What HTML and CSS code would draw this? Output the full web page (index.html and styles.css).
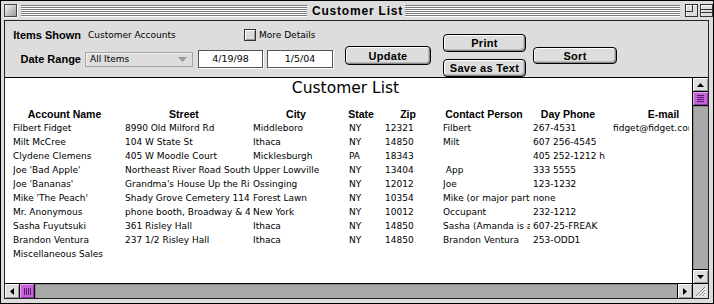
FILE: index.html
```html
<!DOCTYPE html>
<html lang="en">
<head>
    <meta charset="UTF-8">
    <meta name="viewport" content="width=device-width, initial-scale=1.0">
    <title>Customer List</title>
    <link rel="stylesheet" href="styles.css">
</head>
<body>
<div class="window">
    <div class="titlebar">
        <span class="closebox"></span>
        <span class="stripes left"></span>
        <span class="title">Customer List</span>
        <span class="stripes right"></span>
        <span class="zoombox"><i></i></span>
        <span class="collapsebox"><i></i></span>
    </div>
    <div class="frame">
        <div class="panel">
            <div class="controls">
                <div class="filters">
                    <div class="line">
                        <span class="label">Items Shown</span>
                        <span class="value">Customer Accounts</span>
                        <span class="checkbox"></span>
                        <span class="cblabel">More Details</span>
                    </div>
                    <div class="line line2">
                        <span class="label">Date Range</span>
                        <div class="popup">
                            <span>All Items</span>
                            <svg width="9" height="5" viewBox="0 0 9 5"><polygon points="0,0 9,0 4.5,5" fill="#999"/></svg>
                        </div>
                        <div class="field">4/19/98</div>
                        <div class="field second">1/5/04</div>
                    </div>
                </div>
                <button class="btn update">Update</button>
                <div class="btncol">
                    <button class="btn print">Print</button>
                    <button class="btn save">Save as Text</button>
                </div>
                <button class="btn sort">Sort</button>
            </div>

            <div class="listarea">
                <div class="list">
                    <div class="heading">Customer List</div>
                    <div class="headrow">
                        <div class="hcell w1">Account Name</div>
                        <div class="hcell w2">Street</div>
                        <div class="hcell w3">City</div>
                        <div class="hcell w4">State</div>
                        <div class="hcell w5">Zip</div>
                        <div class="hcell w6">Contact Person</div>
                        <div class="hcell w7">Day Phone</div>
                        <div class="hcell w8">E-mail</div>
                    </div>
                    <div id="records"></div>
                </div>
                <div class="vscroll">
                    <div class="arrowbox up">
                        <svg width="7" height="4" viewBox="0 0 7 4"><polygon points="0,4 7,4 3.5,0" fill="#000"/></svg>
                    </div>
                    <div class="vthumb"><i></i><i></i><i></i><i></i></div>
                    <div class="track"></div>
                    <div class="arrowbox down">
                        <svg width="7" height="4" viewBox="0 0 7 4"><polygon points="0,0 7,0 3.5,4" fill="#000"/></svg>
                    </div>
                </div>
            </div>

            <div class="hscroll">
                <div class="arrowbox left">
                    <svg width="4" height="7" viewBox="0 0 4 7"><polygon points="4,0 4,7 0,3.5" fill="#000"/></svg>
                </div>
                <div class="hthumb"><i></i><i></i><i></i><i></i></div>
                <div class="track"></div>
                <div class="arrowbox right">
                    <svg width="4" height="7" viewBox="0 0 4 7"><polygon points="0,0 0,7 4,3.5" fill="#000"/></svg>
                </div>
                <div class="growbox">
                    <svg width="15" height="14" viewBox="0 0 15 14">
                        <line x1="3" y1="12" x2="12" y2="3" stroke="#888"/>
                        <line x1="4" y1="13" x2="13" y2="4" stroke="#fff"/>
                        <line x1="6" y1="12" x2="12" y2="6" stroke="#888"/>
                        <line x1="7" y1="13" x2="13" y2="7" stroke="#fff"/>
                        <line x1="9" y1="12" x2="12" y2="9" stroke="#888"/>
                        <line x1="10" y1="13" x2="13" y2="10" stroke="#fff"/>
                    </svg>
                </div>
            </div>
        </div>
    </div>
</div>

<script>
    let customers = [
        ["Filbert Fidget", "8990 Old Milford Rd", "Middleboro", "NY", "12321", "Filbert", "267-4531", "fidget@fidget.com"],
        ["Milt McCree", "104 W State St", "Ithaca", "NY", "14850", "Milt", "607 256-4545", ""],
        ["Clydene Clemens", "405 W Moodle Court", "Micklesburgh", "PA", "18343", "", "405 252-1212 h", ""],
        ["Joe 'Bad Apple'", "Northeast River Road South", "Upper Lowville", "NY", "13404", " App", "333 5555", ""],
        ["Joe 'Bananas'", "Grandma's House Up the River", "Ossinging", "NY", "12012", "Joe", "123-1232", ""],
        ["Mike 'The Peach'", "Shady Grove Cemetery 114", "Forest Lawn", "NY", "10354", "Mike (or major parts)", "none", ""],
        ["Mr. Anonymous", "phone booth, Broadway & 4th", "New York", "NY", "10012", "Occupant", "232-1212", ""],
        ["Sasha Fuyutsuki", "361 Risley Hall", "Ithaca", "NY", "14850", "Sasha (Amanda is also ok)", "607-25-FREAK", ""],
        ["Brandon Ventura", "237 1/2 Risley Hall", "Ithaca", "NY", "14850", "Brandon Ventura", "253-ODD1", ""],
        ["Miscellaneous Sales", "", "", "", "", "", "", ""]
    ];

    // build the record rows
    let records = document.getElementById("records");
    customers.forEach((c) => {
        let html = '<div class="rec">';
        c.forEach((v) => {
            html += `<div class="cell">${v}</div>`;
        });
        html += '</div>';
        records.innerHTML += html;
    });
</script>
</body>
</html>
```

FILE: styles.css
```css
body{
    margin: 0;
    background-color: #ddd;
}
.window{
    width: 714px;
    height: 304px;
    box-sizing: border-box;
    border: 1px solid #000;
    background-color: #dddddd;
    display: flex;
    flex-direction: column;
    font-family: "DejaVu Sans", sans-serif;
    font-size: 9px;
    color: #000;
}

/* title bar */
.titlebar{
    height: 19px;
    display: flex;
    align-items: center;
}
.closebox{
    margin-left: 3px;
    width: 11px;
    height: 11px;
    border: 1px solid #444;
    background: linear-gradient(135deg, #f4f4f4, #9a9a9a);
    box-shadow: 1px 1px 0 #fff;
}
.stripes{
    height: 12px;
    background: repeating-linear-gradient(#7a7a7a 0 1px, #fff 1px 2px);
}
.stripes.left{
    margin-left: 4px;
    width: 286px;
}
.stripes.right{
    flex: 1;
    margin-left: 2px;
}
.title{
    margin-left: 5px;
    font-family: "Liberation Sans", sans-serif;
    font-weight: bold;
    font-size: 12px;
    letter-spacing: 0.8px;
}
.zoombox, .collapsebox{
    width: 11px;
    height: 11px;
    border: 1px solid #333;
    background: #ddd;
    box-shadow: inset 1px 1px #fff;
}
.zoombox{
    margin-left: 5px;
}
.zoombox i{
    display: block;
    width: 6px;
    height: 6px;
    border-right: 1px solid #333;
    border-bottom: 1px solid #333;
}
.collapsebox{
    margin-left: 2px;
}
.collapsebox i{
    display: block;
    margin-top: 4px;
    height: 2px;
    border-top: 1px solid #333;
    border-bottom: 1px solid #333;
}

/* frame and panel */
.frame{
    flex: 1;
    padding: 0 4px 4px 3px;
    display: flex;
}
.panel{
    flex: 1;
    min-width: 0;
    border: 1px solid #222;
    display: flex;
    flex-direction: column;
    background-color: #dddddd;
}

/* controls */
.controls{
    height: 56px;
    box-sizing: border-box;
    padding-top: 7px;
    display: flex;
    align-items: flex-start;
}
.filters{
    width: 340px;
}
.line{
    display: flex;
    align-items: center;
    height: 14px;
}
.line2{
    height: 18px;
    margin-top: 8px;
}
.label{
    width: 76px;
    flex-shrink: 0;
    text-align: right;
    font-family: "Liberation Sans", sans-serif;
    font-weight: bold;
    font-size: 11px;
}
.value{
    margin-left: 7px;
    width: 156px;
}
.checkbox{
    width: 10px;
    height: 10px;
    border: 1px solid #333;
    background: #ddd;
    box-shadow: inset 1px 1px #fff, inset -1px -1px #999;
}
.cblabel{
    margin-left: 3px;
}
.popup{
    margin-left: 4px;
    width: 108px;
    height: 15px;
    box-sizing: border-box;
    border: 1px solid #a5a5a5;
    box-shadow: inset 1px 1px #f2f2f2;
    padding: 0 5px 0 4px;
    display: flex;
    align-items: center;
    justify-content: space-between;
}
.field{
    margin-left: 5px;
    width: 65px;
    height: 18px;
    box-sizing: border-box;
    border: 1px solid #555;
    box-shadow: 1px 1px 0 #fff;
    background-color: #fff;
    text-align: center;
    line-height: 16px;
    font-size: 9.5px;
}
.field.second{
    margin-left: 4px;
    width: 66px;
}
.btn{
    padding: 0;
    border: 1px solid #000;
    border-radius: 4px;
    background-color: #dddddd;
    box-shadow: inset 1px 1px #fff, inset -1px -1px #8a8a8a, inset -2px -2px #bbb;
    font-family: "Liberation Sans", sans-serif;
    font-weight: bold;
    font-size: 11px;
    letter-spacing: 0.3px;
    color: #000;
}
.update{
    margin-top: 18px;
    width: 86px;
    height: 19px;
}
.btncol{
    margin-left: 12px;
    margin-top: 6px;
    width: 83px;
    display: flex;
    flex-direction: column;
}
.print{
    height: 18px;
}
.save{
    margin-top: 7px;
    height: 18px;
}
.sort{
    margin-left: 7px;
    margin-top: 19px;
    width: 84px;
    height: 17px;
}

/* list */
.listarea{
    height: 206px;
    box-sizing: border-box;
    border-top: 1px solid #000;
    display: flex;
}
.list{
    flex: 1;
    min-width: 0;
    background-color: #fff;
    overflow: hidden;
}
.heading{
    height: 20px;
    line-height: 20px;
    text-align: center;
    padding-right: 6px;
    font-size: 15.5px;
}
.headrow{
    margin-top: 9px;
    height: 14px;
    padding-left: 2px;
    display: flex;
}
.hcell{
    flex-shrink: 0;
    display: flex;
    justify-content: center;
    align-items: center;
    white-space: nowrap;
    font-family: "Liberation Sans", sans-serif;
    font-weight: bold;
    font-size: 10.5px;
}
.w1{ width: 115px; }
.w2{ width: 124px; }
.w3{ width: 100px; }
.w4{ width: 30px; }
.w5{ width: 64px; }
.w6{ width: 88px; }
.w7{ width: 80px; }
.w8{ width: 111px; }

.rec{
    display: grid;
    grid-template-columns: 112px 128px 96px 36px 58px 90px 80px 79px;
    padding-left: 8px;
    height: 14px;
    line-height: 14px;
}
.cell{
    overflow: hidden;
    white-space: pre;
    margin-right: 3px;
}

/* scroll bars */
.vscroll{
    width: 15px;
    flex-shrink: 0;
    border-left: 1px solid #000;
    display: flex;
    flex-direction: column;
}
.track{
    flex: 1;
    background-color: #a9a9a9;
    box-shadow: inset 1px 1px #8a8a8a;
}
.arrowbox{
    flex-shrink: 0;
    display: flex;
    align-items: center;
    justify-content: center;
    background-color: #dddddd;
    box-shadow: inset 1px 1px #fff, inset -1px -1px #999;
}
.arrowbox.up{
    height: 13px;
    border-bottom: 1px solid #000;
}
.arrowbox.down{
    height: 13px;
    border-top: 1px solid #000;
}
.vthumb{
    height: 13px;
    border-bottom: 1px solid #000;
    background-color: #c862d8;
    box-shadow: inset 1px 1px #e3a8ec, inset -1px -1px #8a3a9a;
    display: flex;
    flex-direction: column;
    align-items: center;
    justify-content: center;
    gap: 1px;
}
.vthumb i{
    display: block;
    width: 7px;
    height: 1px;
    background-color: #5a1a6a;
}
.hscroll{
    height: 14px;
    border-top: 1px solid #000;
    display: flex;
}
.arrowbox.left{
    width: 14px;
    border-right: 1px solid #000;
}
.arrowbox.right{
    width: 14px;
    border-left: 1px solid #000;
}
.hthumb{
    width: 14px;
    flex-shrink: 0;
    border-right: 1px solid #000;
    background-color: #c862d8;
    box-shadow: inset 1px 1px #e3a8ec, inset -1px -1px #8a3a9a;
    display: flex;
    align-items: center;
    justify-content: center;
    gap: 1px;
}
.hthumb i{
    display: block;
    width: 1px;
    height: 7px;
    background-color: #5a1a6a;
}
.growbox{
    width: 15px;
    flex-shrink: 0;
    border-left: 1px solid #000;
    background-color: #dddddd;
}
.growbox svg{
    display: block;
}
```
